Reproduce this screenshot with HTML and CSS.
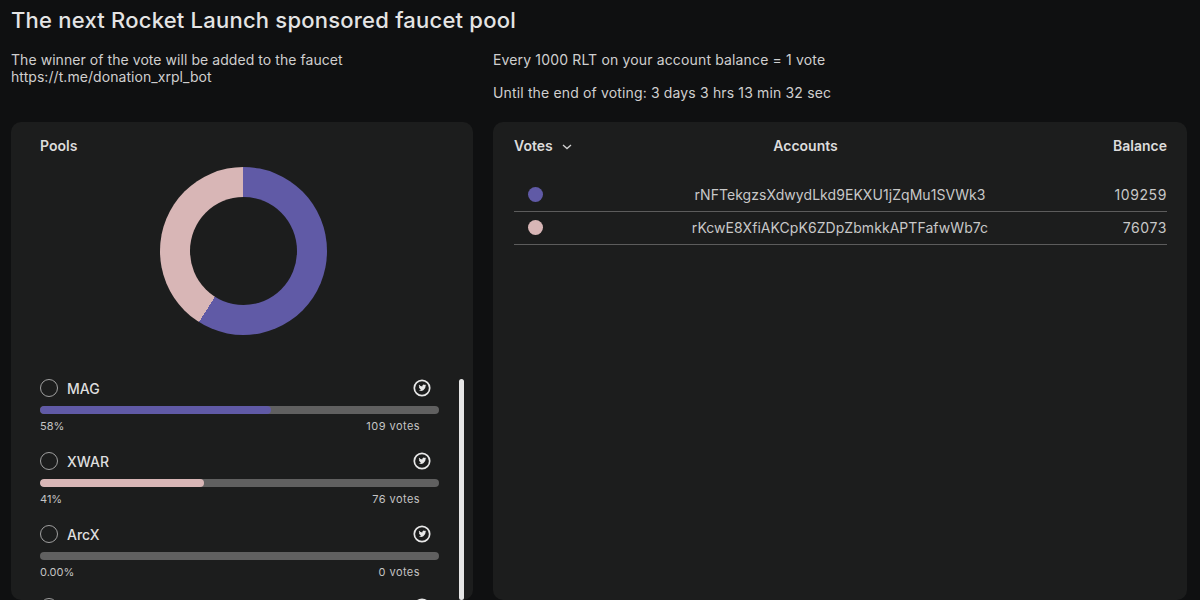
FILE: index.html
```html
<!DOCTYPE html>
<html lang="en">
<head>
<meta charset="utf-8">
<title>Faucet pool vote</title>
<link rel="stylesheet" href="styles.css">
</head>
<body>
<svg class="defs" width="0" height="0" aria-hidden="true">
  <symbol id="tw" viewBox="0 0 18 18">
    <circle cx="9" cy="9" r="7.700" fill="none" stroke="currentColor" stroke-width="1.700"/>
    <path fill="currentColor" d="M13.200 6.300c-.3.100-.6.200-.9.200.3-.2.600-.5.700-.9-.3.200-.6.300-1 .4a1.600 1.600 0 0 0-2.700 1.400 4.400 4.400 0 0 1-3.200-1.600c-.4.700-.2 1.600.5 2.100-.3 0-.5-.1-.7-.2 0 .8.500 1.400 1.300 1.600-.2.100-.5.100-.7 0 .2.600.8 1.100 1.500 1.100a3.200 3.200 0 0 1-2.400.7 4.500 4.500 0 0 0 7-4c.300-.2.500-.5.700-.8z"/>
  </symbol>
</svg>
<main class="page">
  <h1 class="title">The next Rocket Launch sponsored faucet pool</h1>
  <div class="grid">
    <div class="intro">
      <p>The winner of the vote will be added to the faucet<br>https://t.me/donation_xrpl_bot</p>
    </div>
    <div class="intro intro-right">
      <p>Every 1000 RLT on your account balance = 1 vote</p>
      <p>Until the end of voting: 3 days 3 hrs 13 min 32 sec</p>
    </div>
    <section class="card pools">
      <h2 class="heading">Pools</h2>
      <div class="donut-wrap"><div class="donut"></div></div>
      <div class="list">
        <div class="pool">
          <div class="pool-top"><span class="radio"></span><span class="name">MAG</span><svg class="tw"><use href="#tw"/></svg></div>
          <div class="track"><div class="fill purple" style="width:58%"></div></div>
          <div class="meta"><span>58%</span><span class="count">109 votes</span></div>
        </div>
        <div class="pool">
          <div class="pool-top"><span class="radio"></span><span class="name">XWAR</span><svg class="tw"><use href="#tw"/></svg></div>
          <div class="track"><div class="fill pink" style="width:41%"></div></div>
          <div class="meta"><span>41%</span><span class="count">76 votes</span></div>
        </div>
        <div class="pool">
          <div class="pool-top"><span class="radio"></span><span class="name">ArcX</span><svg class="tw"><use href="#tw"/></svg></div>
          <div class="track"></div>
          <div class="meta"><span>0.00%</span><span class="count">0 votes</span></div>
        </div>
        <div class="pool">
          <div class="pool-top"><span class="radio"></span><span class="name"></span><svg class="tw"><use href="#tw"/></svg></div>
        </div>
        <div class="scrollbar"></div>
      </div>
    </section>
    <section class="card votes">
      <div class="thead">
        <div class="th th-votes">Votes
          <svg class="chev" width="10" height="6" viewBox="0 0 10 6"><path d="M1 1l4 3.600L9 1" fill="none" stroke="currentColor" stroke-width="1.300"/></svg>
        </div>
        <div class="th th-acc">Accounts</div>
        <div class="th th-bal">Balance</div>
      </div>
      <div class="row">
        <span class="dot purple"></span>
        <span class="acc">rNFTekgzsXdwydLkd9EKXU1jZqMu1SVWk3</span>
        <span class="bal">109259</span>
      </div>
      <div class="row">
        <span class="dot pink"></span>
        <span class="acc">rKcwE8XfiAKCpK6ZDpZbmkkAPTFafwWb7c</span>
        <span class="bal">76073</span>
      </div>
    </section>
  </div>
</main>
</body>
</html>
```
FILE: styles.css
```css
* { box-sizing: border-box; }
html, body { margin: 0; height: 600px; overflow: hidden; }
body { background: #0f1011; color: #d6d6d6; font-family: Inter, "Liberation Sans", sans-serif; }
.defs { display: block; height: 0; }
.page { height: 600px; padding: 7px 13px 0 11px; overflow: hidden; }
.title { margin: 0; font-size: 22px; line-height: 27px; font-weight: 500; color: #e4e4e4; letter-spacing: 0.22px; }
.grid { display: grid; grid-template-columns: 462px 694px; column-gap: 20px; margin-top: 17px; grid-template-rows: 71px 478px; }
.intro p { margin: 0; font-size: 14px; line-height: 17px; color: #cfcfcf; letter-spacing: 0.06px; }
.intro-right p { letter-spacing: 0.15px; }
.intro-right p + p { margin-top: 16px; }
.card { background: #1c1d1d; border-radius: 10px; overflow: hidden; }
.pools { padding: 15px 0 0 29px; }
.heading { margin: 0; font-size: 14px; line-height: 18px; font-weight: 600; color: #dcdcdc; }
.donut-wrap { display: flex; justify-content: center; margin: 12px 0 0 -27px; }
.donut { width: 167px; height: 168px; border-radius: 50%; background: conic-gradient(#605aa6 0 58.9%, #d8b6b6 58.9% 100%); display: flex; align-items: center; justify-content: center; }
.donut::after { content: ""; width: 107px; height: 108px; border-radius: 50%; background: #1c1d1d; }
.list { position: relative; margin-top: 44px; width: 399px; }
.pool { height: 73px; }
.pool-top { display: flex; align-items: center; height: 18px; }
.radio { width: 18px; height: 18px; border: 1px solid #a0a0a0; border-radius: 50%; flex: none; }
.name { margin-left: 9px; font-size: 14px; font-weight: 500; color: #dedede; flex: 1; }
.tw { width: 18px; height: 18px; color: #e8e8e8; margin-right: 8px; flex: none; }
.track { height: 8px; margin-top: 9px; background: #606060; border-radius: 4px; overflow: hidden; }
.fill { height: 100%; border-radius: 4px; }
.purple { background: #605aa6; }
.pink { background: #d8b6b6; }
.meta { display: flex; justify-content: space-between; margin-top: 5px; padding-right: 19px; font-size: 11px; line-height: 14px; color: #c4c4c4; }
.count { letter-spacing: 0.45px; }
.scrollbar { position: absolute; left: 419px; top: 0; width: 5px; height: 221px; background: #e6e6e6; border-radius: 3px; }
.votes { padding: 15px 20px 0 21px; }
.thead { display: grid; grid-template-columns: 1fr 1fr 1fr; height: 18px; }
.th { font-size: 14px; line-height: 18px; font-weight: 600; color: #dcdcdc; }
.th-votes { display: flex; align-items: center; gap: 9px; }
.chev { color: #d0d0d0; margin-top: 2px; }
.th-acc { text-align: center; margin-left: -70px; }
.th-bal { text-align: right; }
.row { display: flex; align-items: center; height: 33px; padding-bottom: 2px; border-bottom: 1px solid #5c5c5c; font-size: 14px; color: #c8c8c8; }
.thead + .row { margin-top: 24px; }
.dot { width: 15px; height: 15px; border-radius: 50%; margin-left: 14px; flex: none; }
.acc { flex: 1; text-align: center; letter-spacing: 0.06px; margin-left: 90px; }
.bal { flex: none; width: 120px; text-align: right; letter-spacing: 0.6px; }
```
